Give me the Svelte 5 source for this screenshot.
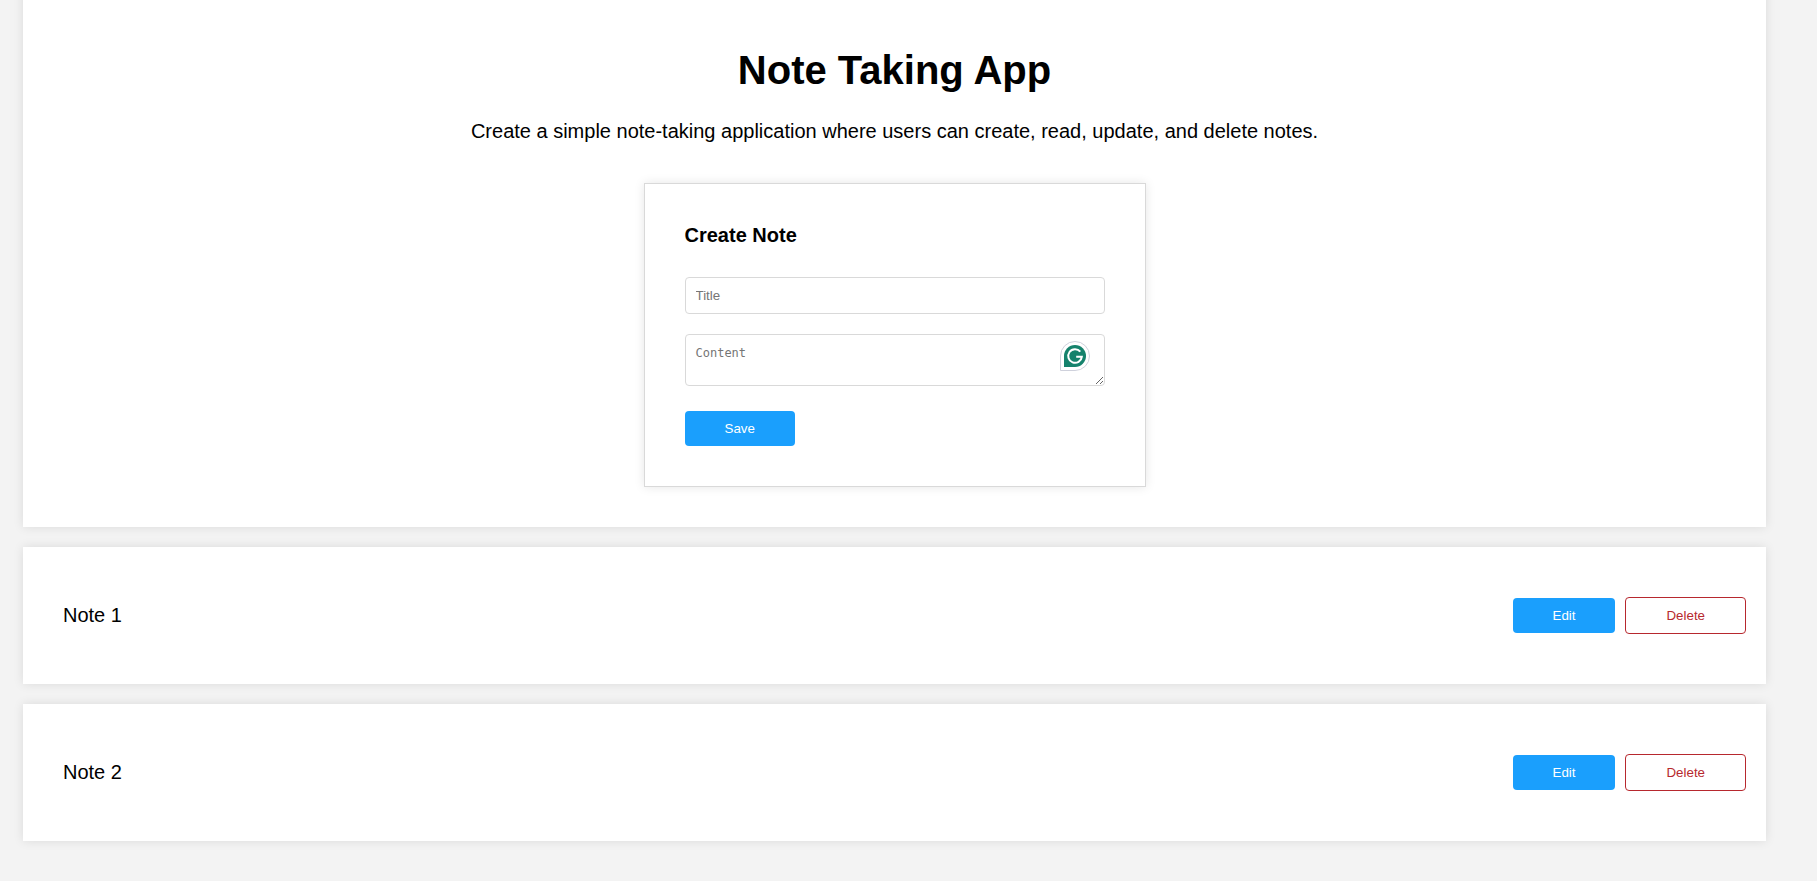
<script>
  let title = $state('');
  let content = $state('');
  let notes = $state([
    { id: 1, title: 'Note 1' },
    { id: 2, title: 'Note 2' }
  ]);
  let editing = $state(null);

  function save(event) {
    event.preventDefault();
    const name = title.trim();
    if (!name) return;
    if (editing !== null) {
      notes = notes.map((n) => (n.id === editing ? { ...n, title: name, content } : n));
    } else {
      notes = [...notes, { id: Date.now(), title: name, content }];
    }
    editing = null;
    title = '';
    content = '';
  }

  function edit(note) {
    editing = note.id;
    title = note.title;
    content = note.content ?? '';
  }

  function remove(id) {
    notes = notes.filter((n) => n.id !== id);
  }
</script>

<main>
  <section class="panel intro">
    <h1>Note Taking App</h1>
    <p>Create a simple note-taking application where users can create, read, update, and delete notes.</p>

    <form class="card" onsubmit={save}>
      <h2>Create Note</h2>
      <input type="text" placeholder="Title" aria-label="Title" bind:value={title} />
      <div class="field">
        <textarea rows="2" placeholder="Content" aria-label="Content" bind:value={content}></textarea>
        <svg class="helper" viewBox="0 0 30 30" aria-hidden="true">
          <path d="M.5 29.5V15A14.5 14.5 0 1 1 15 29.5Z" fill="#fff" stroke="#cfd1dc" />
          <path d="M4 26V15A11 11 0 1 1 15 26Z" fill="#15826c" />
          <path
            d="M20.3 10.7A6.8 6.8 0 1 0 21.8 15.8H16.2"
            fill="none"
            stroke="#fff"
            stroke-width="2"
          />
        </svg>
      </div>
      <button class="primary" type="submit">Save</button>
    </form>
  </section>

  {#each notes as note (note.id)}
    <article class="panel note">
      <span>{note.title}</span>
      <div class="actions">
        <button class="primary" type="button" onclick={() => edit(note)}>Edit</button>
        <button class="danger" type="button" onclick={() => remove(note.id)}>Delete</button>
      </div>
    </article>
  {/each}
</main>

<style>
  :global(body) {
    margin: 0;
    background: #f3f3f3;
    font-family: Arial, 'Liberation Sans', sans-serif;
    color: #000;
  }

  main {
    display: flex;
    flex-direction: column;
    gap: 20px;
    padding: 0 51px 40px 23px;
    font-size: 20px;
    line-height: 24px;
  }

  .panel {
    background: #fff;
    box-shadow: 0 0 10px rgba(0, 0, 0, 0.1);
  }

  .intro {
    display: flex;
    flex-direction: column;
    align-items: center;
    margin-top: -20px;
    padding: 66px 40px 40px;
  }

  h1 {
    margin: 0;
    font-size: 40px;
    line-height: 48px;
  }

  p {
    margin: 25px 0 40px;
    text-align: center;
  }

  .card {
    box-sizing: border-box;
    display: flex;
    flex-direction: column;
    align-items: flex-start;
    gap: 20px;
    width: 100%;
    max-width: 502px;
    padding: 40px;
    border: 1px solid #d9d9d9;
    box-shadow: 0 0 10px rgba(0, 0, 0, 0.1);
  }

  h2 {
    margin: 0 0 11px;
    font-size: 20px;
    line-height: 22px;
  }

  input,
  textarea {
    box-sizing: border-box;
    display: block;
    width: 100%;
    padding: 10px;
    border: 1px solid #d9d9d9;
    border-radius: 4px;
    background: #fff;
  }

  input {
    height: 37px;
    font-family: Arial, 'Liberation Sans', sans-serif;
  }

  textarea {
    height: 52px;
    font: 12px/16px 'DejaVu Sans Mono', monospace;
    resize: vertical;
  }

  .field {
    position: relative;
    width: 100%;
    margin-bottom: 5px;
  }

  .helper {
    position: absolute;
    top: 7px;
    right: 15px;
    width: 30px;
    height: 30px;
  }

  button {
    padding: 10px 40px;
    border: 0;
    border-radius: 4px;
    font-family: Arial, 'Liberation Sans', sans-serif;
    line-height: 15px;
    cursor: pointer;
  }

  .primary {
    background: #1a9ffd;
    color: #fff;
  }

  .danger {
    border: 1px solid #b7282e;
    background: #fff;
    color: #b7282e;
  }

  .note {
    display: flex;
    align-items: center;
    justify-content: space-between;
    padding: 50px 20px 50px 40px;
    line-height: 22px;
  }

  .note span {
    padding-bottom: 1px;
  }

  .actions {
    display: flex;
    align-items: center;
    gap: 10px;
  }
</style>
